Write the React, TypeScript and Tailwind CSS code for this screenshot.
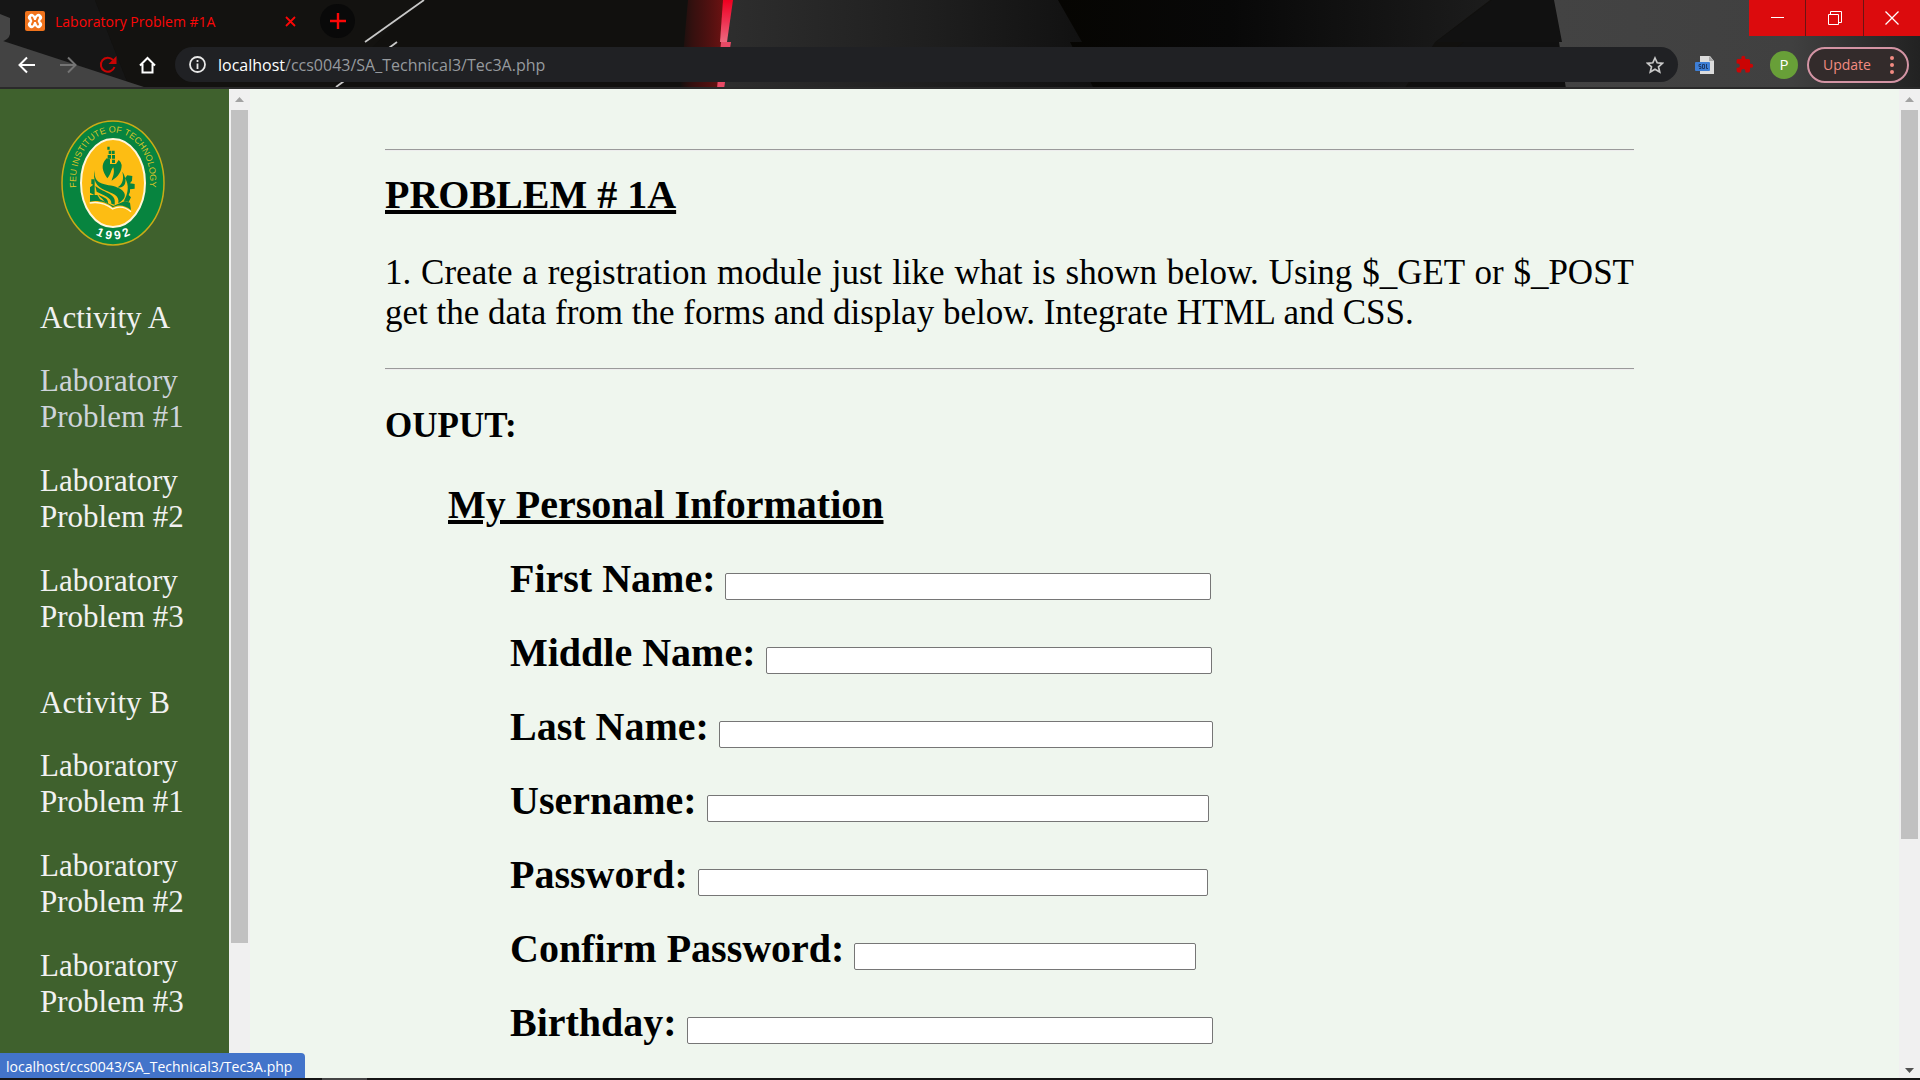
import React from "react";

function ScrollTrack({ thumb, downArrow }: { thumb: string; downArrow: boolean }) {
  return (
    <div aria-hidden="true" className="flex w-[21px] shrink-0 flex-col items-center bg-[#f0f0f0]">
      <div className="flex h-[21px] w-full shrink-0 items-center justify-center">
        <svg width="9" height="5" viewBox="0 0 9 5"><path d="M4.500 0L9 5H0z" fill="#a3a3a3" /></svg>
      </div>
      <div className="flex min-h-0 w-full flex-1 flex-col items-center">
        <div className={thumb} />
      </div>
      <div className="flex h-[16px] w-full shrink-0 items-start justify-center pt-[6px]">
        {downArrow && <svg width="9" height="5" viewBox="0 0 9 5"><path d="M0 0H9L4.500 5z" fill="#505050" /></svg>}
      </div>
    </div>
  );
}

function HeaderArt() {
  return (
    <svg className="absolute inset-0 h-full w-full" viewBox="0 0 1920 89" preserveAspectRatio="none" aria-hidden="true">
      <defs>
        <linearGradient id="glow" x1="0" x2="1"><stop offset="0" stopColor="#7a1010" stopOpacity="0" /><stop offset="0.4" stopColor="#5a1010" stopOpacity="0.6" /><stop offset="1" stopColor="#6e1212" /></linearGradient>
        <linearGradient id="beam" x1="0" x2="0" y1="0" y2="1"><stop offset="0" stopColor="#f00020" /><stop offset="0.5" stopColor="#ee3050" /><stop offset="1" stopColor="#ee6a80" /></linearGradient>
        <linearGradient id="slab" x1="0" x2="1"><stop offset="0" stopColor="#2e2e2e" /><stop offset="0.55" stopColor="#1f1f1f" /><stop offset="1" stopColor="#101010" /></linearGradient>
        <linearGradient id="far" x1="0" x2="1"><stop offset="0" stopColor="#060502" /><stop offset="0.4" stopColor="#080808" /><stop offset="1" stopColor="#1c1c1c" /></linearGradient>
        <linearGradient id="right" x1="0" x2="1"><stop offset="0" stopColor="#434343" /><stop offset="0.65" stopColor="#404040" /><stop offset="1" stopColor="#222" /></linearGradient>
      </defs>
      <rect width="1920" height="89" fill="#11100e" />
      <path d="M10 0H95L130 89L0 42V0z" fill="#161616" />
      <path d="M95 0H420L330 89H130z" fill="#131210" />
      <path d="M0 14L10 18V34Q9 40 0 42z" fill="#454545" />
      <path d="M0 40L150 89H0z" fill="#434343" />
      <path d="M424 0L365 42" stroke="#c8c8c8" strokeWidth="1.800" />
      <path d="M397 42L336 87" stroke="#c8c8c8" strokeWidth="1.800" />
      <path d="M688 0H724L719 89H680z" fill="url(#glow)" />
      <path d="M732 0H1058L1082 42H1070L1094 89H720z" fill="url(#slab)" />
      <path d="M723 0H733L727 42H720z" fill="url(#beam)" />
      <path d="M721 42H731L724 89H717z" fill="#e84a66" />
      <path d="M1058 0H1490L1435 42L1404 89H1094L1070 42H1082z" fill="url(#far)" />
      <path d="M1492 0H1554L1562 42H1436z" fill="#111" />
      <path d="M1464 42H1559L1566 89H1404z" fill="#101010" />
      <path d="M1554 0H1920V89H1566L1559 42H1562z" fill="url(#right)" />
      <rect y="87" width="1920" height="2" fill="#2a2a2a" />
    </svg>
  );
}

function Seal() {
  return (
    <svg width="104" height="126" viewBox="0 0 104 126" role="img" aria-label="FEU Institute of Technology 1992">
      <defs>
        <path id="topArc" d="M17 76A37 48 0 1 1 87 76" />
        <path id="bottomArc" d="M26 109Q52 130 78 109" />
      </defs>
      <ellipse cx="52" cy="63" rx="51" ry="62" fill="#07843f" stroke="#c9ac17" strokeWidth="1.500" />
      <ellipse cx="52" cy="63" rx="32" ry="44" fill="#fdbd13" stroke="#fff7dc" strokeWidth="2" />
      <g transform="scale(.3333) translate(-33 -30)" fill="#07843f">
        <path d="M172 110h7v9h-7zM176 122h8v10h-8zM186 122h8v10h-8zM173 135h10v11h-10zM186 135h9v11h-9zM186 149h9v10h-9z" />
        <path d="M170 145C150 165 158 185 172 205C185 190 182 180 190 172C195 190 188 200 185 212C205 200 215 185 215 165Q213 155 206 150L198 162H180V148z" />
        <path d="M135 180C130 215 150 222 190 228C230 240 236 262 205 280C210 255 185 250 165 241C140 230 126 210 135 180z" />
        <path d="M136 228C165 250 201 250 194 284L184 281C186 262 160 256 140 245z" />
        <path d="M145 254C162 262 176 266 174 280L162 274C162 268 152 264 145 254z" />
        <path d="M217 185C238 218 220 236 203 232C219 222 222 205 217 185z" />
        <path d="M225 205L232 196L247 198L246 212L240 220L254 222V236L240 238Q242 247 236 255L243 262L236 276L222 272C235 250 238 225 225 205z" />
        <path d="M134 208H124V222L130 224L120 232V248L134 256z" />
        <path d="M120 255H142L150 268L190 288L225 273L240 278L243 300C225 285 205 282 188 292C170 275 140 270 120 275z" />
        <path d="M119 279C145 274 168 281 188 297C207 287 225 290 243 305" fill="none" stroke="#fff7dc" strokeWidth="4" />
      </g>
      <text fill="#d8c32a" fontFamily="'Liberation Sans'" fontSize="9"><textPath href="#topArc" startOffset="50%" textAnchor="middle">FEU INSTITUTE OF TECHNOLOGY</textPath></text>
      <text fill="#fff" fontFamily="'Liberation Sans'" fontWeight="bold" fontSize="12"><textPath href="#bottomArc" startOffset="50%" textAnchor="middle">1 9 9 2</textPath></text>
    </svg>
  );
}

function BrowserHeader() {
  return (
    <header className="relative h-[89px] shrink-0 font-['Open_Sans',sans-serif]">
      <HeaderArt />
      <div className="relative flex h-[42px] items-start">
        <div className="flex h-[42px] w-[308px] items-center pl-[25px]">
          <svg width="20" height="20" viewBox="0 0 20 20" aria-hidden="true">
            <rect width="20" height="20" rx="2" fill="#f0731c" />
            <path d="M6.500 6.500L13.500 13.500M13.500 6.500L6.500 13.500" stroke="#fff" strokeWidth="7" strokeLinecap="round" />
            <path d="M7 6.500L8.500 10L7 13.500M13 6.500L11.500 10L13 13.500M8.500 10H11.500" fill="none" stroke="#f0731c" strokeWidth="2" strokeLinecap="round" />
          </svg>
          <span className="ml-[10px] flex-1 whitespace-nowrap text-[14px] text-[#fb0707]">Laboratory Problem #1A</span>
          <button aria-label="Close tab" className="mr-[8px] flex h-5 w-5 items-center justify-center">
            <svg width="11" height="11" viewBox="0 0 11 11"><path d="M1 1L10 10M10 1L1 10" stroke="#fb0707" strokeWidth="1.800" /></svg>
          </button>
        </div>
        <button aria-label="New tab" className="ml-[12px] mt-[4px] flex h-[34px] w-[35px] items-center justify-center rounded-full bg-[#090909]">
          <svg width="16" height="16" viewBox="0 0 16 16"><path d="M8 0V16M0 8H16" stroke="#fb0707" strokeWidth="2.400" /></svg>
        </button>
        <div className="ml-auto flex h-[36px] gap-px bg-[#6b1414]">
          <button aria-label="Minimize" className="flex w-[56px] items-center justify-center bg-[#dc0b0d]">
            <svg width="13" height="13" viewBox="0 0 13 13"><path d="M0 5.500H13" stroke="#fff" /></svg>
          </button>
          <button aria-label="Restore" className="flex w-[57px] items-center justify-center bg-[#dc0b0d]">
            <svg width="14" height="14" viewBox="0 0 14 14" fill="none" stroke="#fff"><path d="M.5 3.500H10.500V13.500H.5zM2.500 3.500V.5H13.500V11.500H10.500" /></svg>
          </button>
          <button aria-label="Close" className="flex w-[56px] items-center justify-center bg-[#dc0b0d]">
            <svg width="14" height="14" viewBox="0 0 14 14"><path d="M.5.5L13.500 13.500M13.500.5L.5 13.500" stroke="#fff" strokeWidth="1.300" /></svg>
          </button>
        </div>
      </div>
      <div className="relative flex h-[45px] items-center pl-[18px] pr-[11px]">
        <button aria-label="Back"><svg width="18" height="18" viewBox="0 0 18 18" fill="none" stroke="#fff" strokeWidth="2"><path d="M17 9H2M9 1.500L1.500 9L9 16.500" /></svg></button>
        <button aria-label="Forward" className="ml-[23px]"><svg width="18" height="18" viewBox="0 0 18 18" fill="none" stroke="#747474" strokeWidth="2"><path d="M1 9H16M9 1.500L16.500 9L9 16.500" /></svg></button>
        <button aria-label="Reload" className="ml-[22px]"><svg width="18" height="18" viewBox="0 0 18 18"><path d="M15.500 11A7 7 0 1 1 14 4" fill="none" stroke="#c80404" strokeWidth="2" /><path d="M17.500 0V8H9.500z" fill="#c80404" /></svg></button>
        <button aria-label="Home" className="ml-[22px]"><svg width="17" height="18" viewBox="0 0 17 18" fill="none" stroke="#fff" strokeWidth="2"><path d="M1 9.500L8.500 2L16 9.500M3.500 8V16.500H13.500V8" /></svg></button>
        <div className="ml-[19px] flex h-[35px] flex-1 items-center rounded-full bg-[#202124] pl-[14px] pr-[14px]">
          <svg width="17" height="17" viewBox="0 0 17 17" fill="none" stroke="#e8e8e8" strokeWidth="1.800" aria-hidden="true"><circle cx="8.500" cy="8.500" r="7.500" /><path d="M8.500 7.500V13M8.500 4V6" /></svg>
          <div className="ml-[12px] flex-1 whitespace-nowrap text-[16px] text-[#969a9e]"><span className="text-white">localhost</span>/ccs0043/SA_Technical3/Tec3A.php</div>
          <button aria-label="Bookmark this page"><svg width="18" height="18" viewBox="0 0 18 18" fill="none" stroke="#c8c8c8" strokeWidth="1.700"><path d="M9 2L11.200 6.800L16.500 7.300L12.500 10.800L13.700 16L9 13.200L4.300 16L5.500 10.800L1.500 7.300L6.800 6.800z" /></svg></button>
        </div>
        <button aria-label="SQL extension" className="ml-[17px]">
          <svg width="20" height="20" viewBox="0 0 20 20"><path d="M5 1H15L19 6V19H5z" fill="#dcdcdc" /><path d="M14 1L19 6H14z" fill="#a8a8a8" /><rect y="7" width="15" height="9" rx="1" fill="#3e7fd6" /><path d="M6 9.500H4V11.500H6V13.500H4M7.500 9.500H9.500V13.500H7.500zM11.500 9V13.500H13" stroke="#1d3a68" fill="none" /></svg>
        </button>
        <button aria-label="Extensions" className="ml-[20px]">
          <svg width="19" height="19" viewBox="0 0 24 24"><path d="M20.500 11H19V7c0-1.100-.9-2-2-2h-4V3.500a2.500 2.500 0 0 0-5 0V5H4c-1.100 0-2 .9-2 2v3.800h1.500a2.700 2.700 0 0 1 0 5.400H2V20c0 1.100.9 2 2 2h3.800v-1.500a2.700 2.700 0 0 1 5.400 0V22H17c1.100 0 2-.9 2-2v-4h1.500a2.500 2.500 0 0 0 0-5z" fill="#cb0404" /></svg>
        </button>
        <button aria-label="Profile" className="ml-[16px] flex h-7 w-7 items-center justify-center rounded-full bg-[#689f38] text-[15px] text-white">P</button>
        <button className="ml-[9px] flex h-[36px] w-[102px] items-center justify-between rounded-full border-2 border-[#d394a4] bg-[#332b2b] pl-[14px] pr-[13px] text-[14px] text-[#f28b82]">
          Update
          <svg width="4" height="18" viewBox="0 0 4 18" fill="#f28b82" aria-hidden="true"><circle cx="2" cy="2" r="2" /><circle cx="2" cy="9" r="2" /><circle cx="2" cy="16" r="2" /></svg>
        </button>
      </div>
    </header>
  );
}

const labs = [
  { name: "Laboratory", problem: "Problem #1" },
  { name: "Laboratory", problem: "Problem #2" },
  { name: "Laboratory", problem: "Problem #3" },
];

function LabGroup({ title, current }: { title: string; current?: number }) {
  return (
    <section>
      <h2 className="mb-[27px]">{title}</h2>
      <div className="flex flex-col gap-[28px]">
        {labs.map((lab, i) => (
          <a key={lab.problem} href="#" className={i === current ? "text-[#ced4da]" : ""}>
            {`${lab.name} ${lab.problem}`}
          </a>
        ))}
      </div>
    </section>
  );
}

const fields = [
  { id: "first", label: "First Name:", type: "text", width: "w-[486px]" },
  { id: "middle", label: "Middle Name:", type: "text", width: "w-[446px]" },
  { id: "last", label: "Last Name:", type: "text", width: "w-[494px]" },
  { id: "user", label: "Username:", type: "text", width: "w-[502px]" },
  { id: "password", label: "Password:", type: "password", width: "w-[510px]" },
  { id: "confirm", label: "Confirm Password:", type: "password", width: "w-[342px]" },
  { id: "birthday", label: "Birthday:", type: "text", width: "w-[526px]" },
];

function Rule() {
  return <hr className="h-[2px] border-t border-b border-t-[#9a9a9a] border-b-[#ededed]" />;
}

export default function App() {
  return (
    <div className="flex h-screen flex-col overflow-hidden bg-[#151515]">
      <BrowserHeader />
      <div className="relative flex min-h-0 flex-1 font-['Liberation_Serif',serif]">
        <nav className="flex w-[229px] shrink-0 flex-col overflow-hidden bg-[#3f612d] pl-[40px] pr-[44px] pt-[31px] text-[31px] leading-[36px] text-[#f1f1f1]">
          <div className="mb-[54px] flex shrink-0 justify-center"><Seal /></div>
          <div className="flex flex-col gap-[50px]">
            <LabGroup title="Activity A" current={0} />
            <LabGroup title="Activity B" />
          </div>
        </nav>
        <ScrollTrack thumb="h-[87.500%] w-[17px] bg-[#c1c1c1]" downArrow={false} />
        <main className="min-w-0 flex-1 overflow-hidden bg-[#eff6ee] pl-[135px] pr-[265px] pt-[60px] text-black">
          <Rule />
          <h1 className="mt-[21px] text-[40px] font-bold leading-[46px] underline decoration-[4px] underline-offset-[2px]">PROBLEM # 1A</h1>
          <p className="mb-[35px] mt-[35px] text-justify text-[35px] leading-[40px]">
            1. Create a registration module just like what is shown below. Using $_GET or $_POST get the data from the forms and display below. Integrate HTML and CSS.
          </p>
          <Rule />
          <h2 className="mt-[36px] text-[35px] font-bold leading-[40px]">OUPUT:</h2>
          <h3 className="ml-[63px] mt-[36px] text-[40px] font-bold leading-[46px] underline decoration-[4px] underline-offset-[2px]">My Personal Information</h3>
          <form className="ml-[125px] mt-[28px] flex flex-col gap-[28px]">
            {fields.map((f) => (
              <div key={f.id} className="flex items-end gap-[10px]">
                <label htmlFor={f.id} className="whitespace-nowrap text-[40px] font-bold leading-[46px]">{f.label}</label>
                <input id={f.id} type={f.type} className={"mb-[2px] h-[27px] rounded-[2px] border border-[#767676] bg-white px-1 text-base " + f.width} />
              </div>
            ))}
          </form>
        </main>
        <ScrollTrack thumb="h-[76.600%] w-[17px] bg-[#c1c1c1]" downArrow />
        <div className="absolute bottom-0 left-0 flex h-[25px] items-center rounded-tr-[4px] bg-[#4374ca] pl-[6px] pr-[13px] pt-[2px] font-['Open_Sans',sans-serif] text-[14px] text-white">
          localhost/ccs0043/SA_Technical3/Tec3A.php
        </div>
      </div>
      <div className="flex h-[2px] shrink-0 pl-[322px]">
        <div className="w-[45px] bg-[#454545]" />
      </div>
    </div>
  );
}
